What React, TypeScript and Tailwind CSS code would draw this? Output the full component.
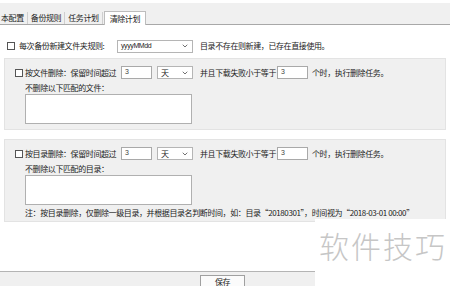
import { ChevronDown } from "lucide-react";

const font = { fontFamily: '"Noto Sans CJK SC", "Liberation Sans", sans-serif' };

function Check() {
  return <span className="h-[8px] w-[8px] shrink-0 border border-[#555] bg-white" />;
}

function Field({ value, w }: { value: string; w: string }) {
  return (
    <span
      className={`flex h-[13px] shrink-0 items-center border border-[#a9a9a9] bg-white pl-[3px] text-[7px] text-[#444] ${w}`}
      style={{ fontFamily: '"Liberation Sans", sans-serif' }}
    >
      {value}
    </span>
  );
}

function Select({ value, w, mono }: { value: string; w: string; mono?: boolean }) {
  return (
    <span
      className={`flex h-[13px] shrink-0 items-center justify-between border border-[#b5b5b5] bg-white pl-[3px] pr-[3px] text-[8px] text-[#222] ${w}`}
      style={mono ? { fontFamily: '"Liberation Sans", sans-serif', fontSize: "7px" } : undefined}
    >
      <span>{value}</span>
      <ChevronDown className="h-[8px] w-[8px] text-[#555]" strokeWidth={2.5} />
    </span>
  );
}

function RuleBox({ kind, target, note }: { kind: string; target: string; note?: string }) {
  return (
    <div className="mx-[4px] border border-[#e3e3e3] bg-[#f0f0f0] pl-[10px] pt-[7px] pb-[5px]">
      <div className="flex h-[13px] items-center">
        <Check />
        <span className="ml-[2px] w-[96px]">{kind}：保留时间超过</span>
        <Field value="3" w="w-[31px]" />
        <span className="ml-[5px]" />
        <Select value="天" w="w-[36px]" />
        <span className="ml-[7px] w-[77px]">并且下载失败小于等于</span>
        <Field value="3" w="w-[31px]" />
        <span className="ml-[4px]">个时，执行删除任务。</span>
      </div>
      <div className="ml-[10px] mt-[3px] leading-[11px]">不删除以下匹配的{target}：</div>
      <div className="ml-[10px] mt-[1px] h-[30px] w-[167px] border border-[#b0b0b0] bg-white" />
      {note ? <div className="-mb-[2px] ml-[10px] mt-[2px] leading-[11px]">{note}</div> : null}
    </div>
  );
}

export default function App() {
  const tabs = ["本配置", "备份规则", "任务计划"];
  return (
    <div
      className="relative flex h-[286px] w-[450px] flex-col overflow-hidden bg-white text-[8px] tracking-[-0.4px] text-[#222]"
      style={font}
    >
      <div className="mt-[3px] flex h-[22px] items-end border-b border-[#a8a8a8] bg-[#f0f0f0]">
        {tabs.map((t, i) => (
          <span
            key={t}
            className={`flex h-[12px] items-center border-r border-[#cfcfcf] pr-[3px] ${i === 0 ? "pl-[1px]" : "pl-[3px]"}`}
          >
            {t}
          </span>
        ))}
        <span className="-mb-px ml-[1px] flex h-[14px] items-center border border-b-0 border-[#bdbdbd] bg-white px-[5px]">
          清除计划
        </span>
      </div>

      <div className="mt-[15px] flex h-[12px] items-center pl-[7px]">
        <Check />
        <span className="ml-[4px] w-[98px]">每次备份新建文件夹规则:</span>
        <Select value="yyyyMMdd" w="w-[76px]" mono />
        <span className="ml-[7px]">目录不存在则新建，已存在直接使用。</span>
      </div>

      <div className="mt-[6px]">
        <RuleBox kind="按文件删除" target="文件" />
      </div>
      <div className="mt-[9px]">
        <RuleBox
          kind="按目录删除"
          target="目录"
          note="注：按目录删除，仅删除一级目录，并根据目录名判断时间，如：目录“20180301”，时间视为“2018-03-01 00:00”"
        />
      </div>

      <div className="mt-auto h-[15px] border-t border-[#b4b4b4] bg-[#f0f0f0]">
        <div className="ml-[200px] mt-[3px] flex h-[12px] w-[45px] items-center justify-center border border-b-0 border-[#a0a0a0] bg-[#fbfbfb] leading-[10px]">
          保存
        </div>
      </div>

      <div className="absolute left-[315px] top-[219px] flex h-[67px] w-[135px] items-start bg-white pl-[4px] pt-[9px]">
        <span className="text-[30px] font-light leading-[34px] tracking-[2px] text-[#c6c6c6]">软件技巧</span>
      </div>
    </div>
  );
}
